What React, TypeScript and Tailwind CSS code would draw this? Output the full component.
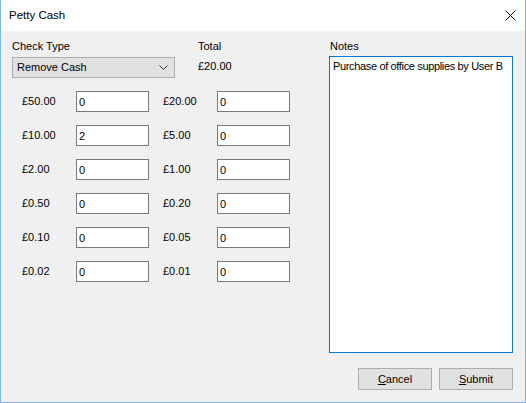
import React from "react";

const rows: [string, string, string, string][] = [
  ["£50.00", "0", "£20.00", "0"],
  ["£10.00", "2", "£5.00", "0"],
  ["£2.00", "0", "£1.00", "0"],
  ["£0.50", "0", "£0.20", "0"],
  ["£0.10", "0", "£0.05", "0"],
  ["£0.02", "0", "£0.01", "0"],
];

function Box({ value }: { value: string }) {
  return (
    <input
      defaultValue={value}
      className="w-[73px] h-[21px] border border-[#7a7a7a] bg-white px-[2px] text-[11px] leading-[13px] text-black outline-none font-['Liberation_Sans',sans-serif]"
    />
  );
}

export default function App() {
  return (
    <div className="w-[526px] h-[403px] bg-[#f0f0f0] border-x border-b border-[#7cb5ec] flex flex-col font-['Liberation_Sans',sans-serif] text-[11px] leading-[13px] text-black">
      <div className="h-[31px] shrink-0 bg-white flex items-center justify-between pl-[8px] pr-[9px]">
        <span className="text-[11.5px]">Petty Cash</span>
        <svg width="11" height="11" viewBox="0 0 11 11">
          <path d="M0.5 0.5 L10.5 10.5 M10.5 0.5 L0.5 10.5" stroke="#000" strokeWidth="1" />
        </svg>
      </div>
      <div className="flex-1 flex flex-col pt-[9px]">
        <div className="flex">
          <div className="w-[328px] pl-[11px]">
            <div className="flex">
              <div className="w-[186px]">
                <div>Check Type</div>
                <div className="mt-[4px] w-[163px] h-[21px] border border-[#adadad] bg-[#e1e1e1] flex items-center justify-between pl-[4px] pr-[6px]">
                  <span>Remove Cash</span>
                  <svg width="9" height="5" viewBox="0 0 9 5">
                    <path d="M0.5 0.5 L4.5 4.5 L8.5 0.5" stroke="#333" strokeWidth="1" fill="none" />
                  </svg>
                </div>
              </div>
              <div>
                <div>Total</div>
                <div className="mt-[7px]">£20.00</div>
              </div>
            </div>
            <div className="mt-[13px] ml-[10px] grid grid-cols-[54px_73px_14px_54px_73px] gap-y-[13px]">
              {rows.map((r, i) => (
                <React.Fragment key={i}>
                  <div className="flex items-center">{r[0]}</div>
                  <Box value={r[1]} />
                  <div />
                  <div className="flex items-center">{r[2]}</div>
                  <Box value={r[3]} />
                </React.Fragment>
              ))}
            </div>
          </div>
          <div className="w-[184px]">
            <div className="pl-[1px]">Notes</div>
            <div className="mt-[3px] h-[297px] border border-[#0078d7] bg-white pl-[3px] pt-[3px] whitespace-nowrap overflow-hidden tracking-[-0.35px]">
              Purchase of office supplies by User B
            </div>
          </div>
        </div>
        <div className="mt-[15px] flex justify-end gap-[7px] pr-[12px]">
          <button className="w-[74px] h-[22px] border border-[#adadad] bg-[#e1e1e1] text-[11px] leading-[13px]">
            <span className="underline">C</span>ancel
          </button>
          <button className="w-[74px] h-[22px] border border-[#adadad] bg-[#e1e1e1] text-[11px] leading-[13px]">
            <span className="underline">S</span>ubmit
          </button>
        </div>
      </div>
    </div>
  );
}
